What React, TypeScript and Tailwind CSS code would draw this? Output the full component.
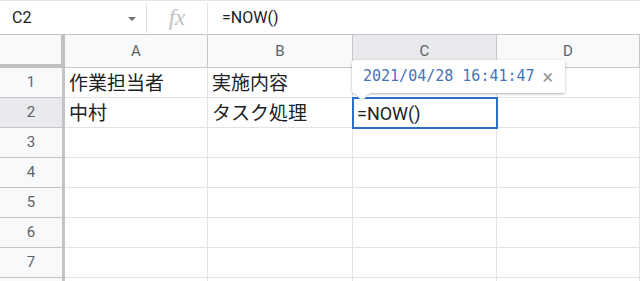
import React from 'react'

const cols = ['A', 'B', 'C', 'D']
const rows: string[][] = [
  ['作業担当者', '実施内容', '', ''],
  ['中村', 'タスク処理', '=NOW()', ''],
  ['', '', '', ''],
  ['', '', '', ''],
  ['', '', '', ''],
  ['', '', '', ''],
  ['', '', '', ''],
  ['', '', '', ''],
]

const font = { fontFamily: 'Roboto, "Noto Sans CJK JP", Arial, sans-serif' }

const App = () => {
  return (
    <div className="relative w-[640px] h-[281px] overflow-hidden bg-white text-[#202124]" style={font}>
      {/* formula bar */}
      <div className="flex items-center h-[35px] border-t border-[#e3e3e3] border-b border-b-[#c4c4c4]">
        <div className="flex items-center w-[146px] h-full pl-[12px] pr-[10px]">
          <span className="text-[16px] flex-1">C2</span>
          <span className="w-0 h-0 border-l-[4px] border-r-[4px] border-t-[4px] border-l-transparent border-r-transparent border-t-[#707070] mt-[2px]" />
        </div>
        <div className="w-px h-[30px] bg-[#e2e2e2]" />
        <div className="w-[60px] flex justify-center">
          <span className="text-[23px] italic text-[#c2c2c2] leading-none" style={{ fontFamily: '"Liberation Serif", serif' }}>fx</span>
        </div>
        <div className="w-px h-[30px] bg-[#e2e2e2]" />
        <span className="pl-[14px] text-[16px]">=NOW()</span>
      </div>

      {/* sheet */}
      <div className="grid grid-cols-[65px_143px_145px_144px_1fr]">
        <div className="h-[33px] bg-[#f8f9fa] border-r-[4px] border-b-[4px] border-[#c0c0c0]" />
        {cols.map((c) => (
          <div
            key={c}
            className={`h-[33px] flex items-center justify-center text-[15px] text-[#5f6368] border-r border-b border-[#c7c7c7] ${c === 'C' ? 'bg-[#e8eaed]' : 'bg-[#f8f9fa]'}`}
          >
            {c}
          </div>
        ))}
        {rows.map((r, i) => (
          <React.Fragment key={i}>
            <div
              className={`h-[30px] flex items-center justify-center text-[15px] text-[#5f6368] border-r-[3px] border-b border-[#c4c4c4] ${i === 1 ? 'bg-[#e8eaed]' : 'bg-[#f8f9fa]'}`}
            >
              {i < 7 ? i + 1 : ''}
            </div>
            {r.map((v, j) => (
              <div
                key={j}
                className={`h-[30px] flex items-end pb-[4px] px-[4px] leading-none border-r border-b border-[#e2e2e2] whitespace-nowrap ${v.startsWith('=') ? 'text-[18px]' : 'text-[19px]'}`}
              >
                {v}
              </div>
            ))}
          </React.Fragment>
        ))}
      </div>

      {/* selected cell */}
      <div className="absolute left-[352px] top-[97px] w-[146px] h-[32px] border-2 border-[#2c6ecb]" />

      {/* value tooltip */}
      <div className="absolute left-[352px] top-[60px] w-[213px] h-[33px] bg-white rounded-[2px] shadow-[0_1px_3px_rgba(0,0,0,0.3)] flex items-center pl-[11px]">
        <span className="text-[15px] text-[#4672bb]" style={{ fontFamily: '"DejaVu Sans Mono", "Liberation Mono", monospace' }}>
          2021/04/28 16:41:47
        </span>
        <span className="ml-[8px] text-[20px] text-[#9a9a9a] leading-none">×</span>
      </div>
      <svg className="absolute left-[352px] top-[92px]" width="22" height="10" viewBox="0 0 22 10">
        <path d="M0 0 L10 8 L20 0" fill="white" stroke="#d0d0d0" strokeWidth="1" />
        <path d="M0.5 0 L19.5 0" stroke="white" strokeWidth="2" />
      </svg>
    </div>
  )
}

export default App
